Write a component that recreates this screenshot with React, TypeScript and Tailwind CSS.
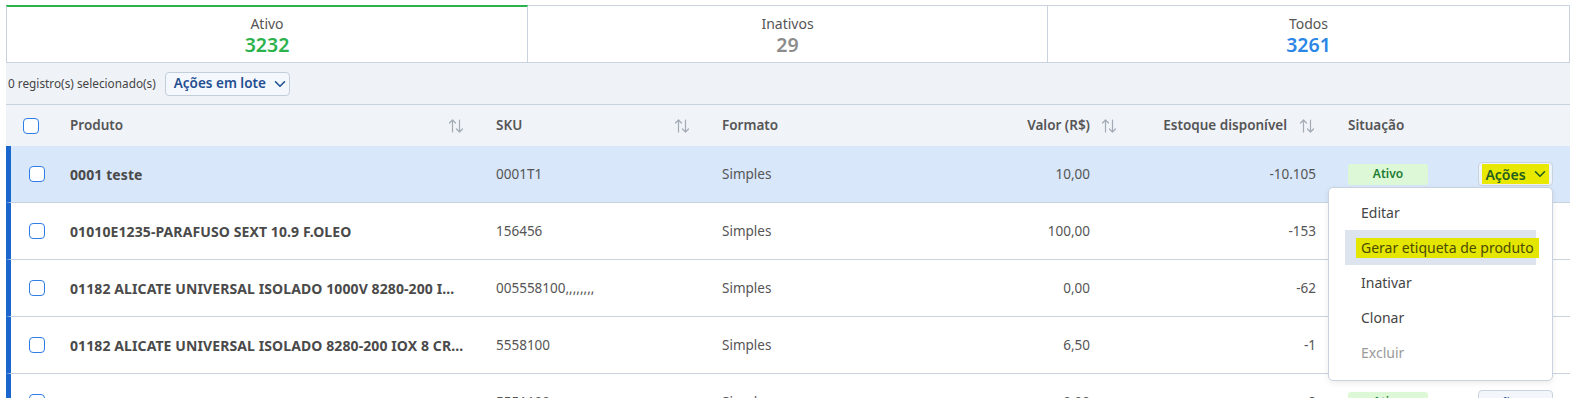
import React from "react";

const SortIcon = () => (
  <svg width="16" height="14" viewBox="0 0 16 14" fill="none" stroke="#a3abb5" strokeWidth="1.2" strokeLinecap="round" strokeLinejoin="round">
    <path d="M4.5 13V1M1.5 4L4.5 1L7.5 4" />
    <path d="M11.5 1V13M8.5 10L11.5 13L14.5 10" />
  </svg>
);

const Chevron = ({ color }: { color: string }) => (
  <svg width="12" height="8" viewBox="0 0 12 8" fill="none" stroke={color} strokeWidth="1.6" strokeLinecap="round" strokeLinejoin="round">
    <path d="M1.5 1.8L6 6.2L10.5 1.8" />
  </svg>
);

const Checkbox = () => (
  <div className="w-[16px] h-[16px] rounded-[4px] border-[1.5px] border-[#2f7de6] bg-white" />
);

type Row = {
  name: string;
  sku: string;
  valor: string;
  estoque: string;
};

const rows: Row[] = [
  { name: "0001 teste", sku: "0001T1", valor: "10,00", estoque: "-10.105" },
  { name: "01010E1235-PARAFUSO SEXT 10.9 F.OLEO", sku: "156456", valor: "100,00", estoque: "-153" },
  { name: "01182 ALICATE UNIVERSAL ISOLADO 1000V 8280-200 IOX 8 CRV GEDORE", sku: "005558100,,,,,,,,", valor: "0,00", estoque: "-62" },
  { name: "01182 ALICATE UNIVERSAL ISOLADO 8280-200 IOX 8 CRV GEDORE RED", sku: "5558100", valor: "6,50", estoque: "-1" },
  { name: "00171 ALICATE DE BICO MEIA CANA 8180-200 IOX 8 CRV GEDORE", sku: "5551100", valor: "0,00", estoque: "-8" },
];

export default function App() {
  return (
    <div className="w-[1576px] h-[398px] overflow-hidden bg-white text-[#4a4a4a] font-['Noto_Sans',sans-serif]">
      <div className="ml-[6px] w-[1564px] pt-[5px]">
        {/* Tabs */}
        <div className="flex border-b border-[#c9d3df]">
          <div className="w-[522px] h-[57px] border-t-2 border-l border-r border-[#c9d3df] border-t-[#2bb24c] flex flex-col items-center pt-[7px]">
            <div className="text-[14px] leading-[19px] text-[#555]">Ativo</div>
            <div className="text-[19.5px] leading-[24px] font-semibold text-[#2bb24c]">3232</div>
          </div>
          <div className="w-[520px] h-[57px] border-t border-r border-[#c9d3df] flex flex-col items-center pt-[8px]">
            <div className="text-[14px] leading-[19px] text-[#555]">Inativos</div>
            <div className="text-[19.5px] leading-[24px] font-semibold text-[#8c8c8c]">29</div>
          </div>
          <div className="flex-1 h-[57px] border-t border-r border-[#c9d3df] flex flex-col items-center pt-[8px]">
            <div className="text-[14px] leading-[19px] text-[#555]">Todos</div>
            <div className="text-[19.5px] leading-[24px] font-semibold text-[#2b86e6]">3261</div>
          </div>
        </div>

        {/* Toolbar */}
        <div className="h-[41px] bg-[#eff3f8] flex items-center pl-[2px]">
          <span className="text-[11.8px] text-[#444] whitespace-nowrap">0 registro(s) selecionado(s)</span>
          <button className="ml-[9px] h-[24px] w-[125px] rounded-[4px] border border-[#c3cedb] bg-[#f4f7fb] flex items-center pl-[8px] gap-[8px]">
            <span className="text-[13.5px] font-semibold text-[#1f4f91] whitespace-nowrap">Ações em lote</span>
            <Chevron color="#1f4f91" />
          </button>
        </div>

        {/* Header */}
        <div className="h-[42px] border-t border-[#c9d3df] bg-[#f0f3f8] flex items-center text-[13.5px] font-semibold text-[#555]">
          <div className="w-[54px] pl-[17px] flex items-center"><Checkbox /></div>
          <div className="w-[426px] pl-[10px] pr-[22px] flex items-center justify-between">
            <span>Produto</span>
            <SortIcon />
          </div>
          <div className="w-[226px] pl-[10px] pr-[22px] flex items-center justify-between">
            <span>SKU</span>
            <SortIcon />
          </div>
          <div className="w-[188px] pl-[10px]">Formato</div>
          <div className="w-[230px] pr-[13px] flex items-center justify-end gap-[11px]">
            <span>Valor (R$)</span>
            <SortIcon />
          </div>
          <div className="w-[208px] pr-[23px] flex items-center justify-end gap-[12px]">
            <span>Estoque disponível</span>
            <SortIcon />
          </div>
          <div className="w-[130px] pl-[10px]">Situação</div>
          <div className="flex-1" />
        </div>

        {/* Rows */}
        {rows.map((r, i) => (
          <div
            key={i}
            className={`h-[57px] border-b border-b-[#c9d3df] border-l-[5px] border-l-[#1a66cc] flex items-center text-[13.5px] ${i === 0 ? "bg-[#d8e7f9]" : "bg-white"}`}
          >
            <div className="w-[49px] pl-[18px] flex items-center"><Checkbox /></div>
            <div className="w-[426px] pl-[10px] pr-[22px] font-bold text-[14px] tracking-[0.1px] text-[#4a4a4a] truncate">{r.name}</div>
            <div className="w-[226px] pl-[10px] text-[#555]">{r.sku}</div>
            <div className="w-[188px] pl-[10px] text-[#555]">Simples</div>
            <div className="w-[230px] pr-[40px] text-right text-[#555]">{r.valor}</div>
            <div className="w-[208px] pr-[22px] text-right text-[#555]">{r.estoque}</div>
            <div className="w-[130px] pl-[10px]">
              <div className="w-[80px] h-[21px] rounded-[3px] bg-[#dcf8d6] text-[#1e7b34] text-[12px] font-semibold flex items-center justify-center">Ativo</div>
            </div>
            <div className="flex-1 flex justify-end pr-[17px] relative">
              {i === 0 ? (
                <>
                  <button className="w-[75px] h-[24px] rounded-[4px] border border-[#c9d3df] bg-[#eef3f9] px-[3px] py-[1px] flex">
                    <span className="flex-1 bg-[#e8e800] flex items-center justify-center gap-[8px]">
                      <span className="text-[14px] font-semibold text-[#1f5f1f]">Ações</span>
                      <Chevron color="#1f5f1f" />
                    </span>
                  </button>
                  <div className="absolute right-[17px] top-[25px] w-[225px] h-[194px] z-10 bg-white rounded-[5px] border border-[#c9d3df] shadow-[0_2px_6px_rgba(0,0,0,0.08)] pt-[7px] px-[16px] text-[14px] text-[#444]">
                    <div className="h-[35px] flex items-center pl-[16px]">Editar</div>
                    <div className="h-[35px] flex items-center pl-[11px] bg-[#dde4ee]">
                      <span className="bg-[#e4e600] px-[5px] h-[20px] flex items-center text-[#4b4b00] whitespace-nowrap">Gerar etiqueta de produto</span>
                    </div>
                    <div className="h-[35px] flex items-center pl-[16px]">Inativar</div>
                    <div className="h-[35px] flex items-center pl-[16px]">Clonar</div>
                    <div className="h-[35px] flex items-center pl-[16px] text-[#9a9a9a]">Excluir</div>
                  </div>
                </>
              ) : (
                <button className="w-[75px] h-[24px] rounded-[4px] border border-[#c9d3df] bg-[#f3f6fa] flex items-center justify-center gap-[8px]">
                  <span className="text-[14px] font-semibold text-[#1f4f91]">Ações</span>
                  <Chevron color="#1f4f91" />
                </button>
              )}
            </div>
          </div>
        ))}
      </div>
    </div>
  );
}
